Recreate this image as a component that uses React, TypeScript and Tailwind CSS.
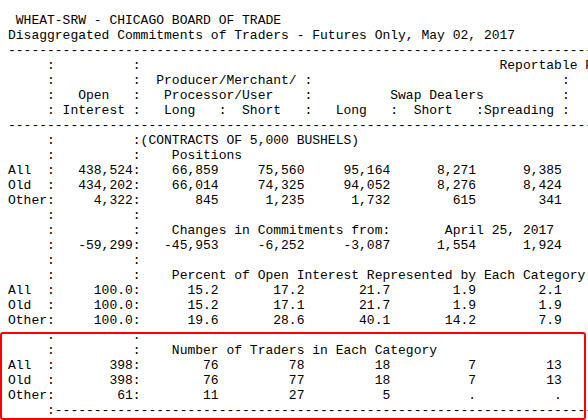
const dashes = '-'.repeat(90);
const blank = '     :          :';

const row = (label: string, oi: string, cols: string[]) =>
    label.padEnd(5) + ':' + oi.padStart(10) + ':' + cols[0].padStart(10) + cols.slice(1).map(c => c.padStart(11)).join('');

const lines: string[] = [
    ' WHEAT-SRW - CHICAGO BOARD OF TRADE',
    'Disaggregated Commitments of Traders - Futures Only, May 02, 2017',
    dashes,
    blank.padEnd(63) + 'Reportable Positions',
    (blank + '  Producer/Merchant/ :').padEnd(71) + ':',
    ('     :   Open   :   Processor/User    :'.padEnd(49) + 'Swap Dealers').padEnd(71) + ':',
    '     : Interest :   Long   :  Short   :   Long   :  Short   :Spreading :',
    dashes,
    blank + '(CONTRACTS OF 5,000 BUSHELS)',
    blank + '    Positions',
    row('All', '438,524', ['66,859', '75,560', '95,164', '8,271', '9,385']),
    row('Old', '434,202', ['66,014', '74,325', '94,052', '8,276', '8,424']),
    row('Other', '4,322', ['845', '1,235', '1,732', '615', '341']),
    blank,
    (blank + '    Changes in Commitments from:').padEnd(56) + 'April 25, 2017',
    row('', '-59,299', ['-45,953', '-6,252', '-3,087', '1,554', '1,924']),
    blank,
    blank + '    Percent of Open Interest Represented by Each Category of Trader',
    row('All', '100.0', ['15.2', '17.2', '21.7', '1.9', '2.1']),
    row('Old', '100.0', ['15.2', '17.1', '21.7', '1.9', '1.9']),
    row('Other', '100.0', ['19.6', '28.6', '40.1', '14.2', '7.9']),
    blank,
    blank + '    Number of Traders in Each Category',
    row('All', '398', ['76', '78', '18', '7', '13']),
    row('Old', '398', ['76', '77', '18', '7', '13']),
    row('Other', '61', ['11', '27', '5', '.', '.']),
    '     :' + dashes,
];

const App = () => {
    return (
        <main className="relative w-[588px] h-[420px] overflow-hidden bg-white">
            <pre className="pt-[13px] pl-2 font-['Liberation_Mono',monospace] text-[13px] leading-[15px] text-black whitespace-pre">
                {lines.join('\n')}
            </pre>

            {/* highlight around the trader counts */}
            <div className="absolute left-0 top-[332px] w-[586px] h-[88px] border-2 border-[#ff0000] rounded-[3px]"></div>
        </main>
    );
};

export default App;
